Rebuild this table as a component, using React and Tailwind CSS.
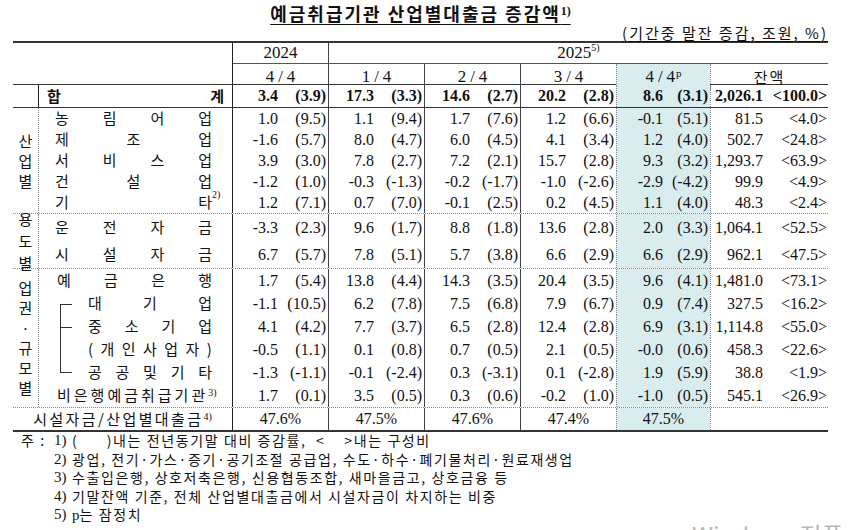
import React from "react";

const KR = "font-['Noto_Sans_CJK_KR',sans-serif]";
const NUM = "font-['Liberation_Serif','Noto_Sans_CJK_KR',serif]";

// 데이터 열 (2024 4/4, 1/4, 2/4, 3/4, 4/4p, 잔액)
const colCls = [
	"w-[96px] border-l border-[#222]",
	"w-[96px] border-l border-[#444]",
	"w-[96px] border-l border-[#444]",
	"w-[96px] border-l border-[#444]",
	"w-[94px] border-l border-dotted border-[#888] bg-[#d9ecee]",
	"w-[118px] border-l border-dotted border-[#888]",
];

const total = [
	["3.4", "(3.9)"],
	["17.3", "(3.3)"],
	["14.6", "(2.7)"],
	["20.2", "(2.8)"],
	["8.6", "(3.1)"],
	["2,026.1", "<100.0>"],
];

const industry = [
	{
		chars: ["농", "림", "어", "업"],
		d: [["1.0", "(9.5)"], ["1.1", "(9.4)"], ["1.7", "(7.6)"], ["1.2", "(6.6)"], ["-0.1", "(5.1)"], ["81.5", "<4.0>"]],
	},
	{
		chars: ["제", "조", "업"],
		d: [["-1.6", "(5.7)"], ["8.0", "(4.7)"], ["6.0", "(4.5)"], ["4.1", "(3.4)"], ["1.2", "(4.0)"], ["502.7", "<24.8>"]],
	},
	{
		chars: ["서", "비", "스", "업"],
		d: [["3.9", "(3.0)"], ["7.8", "(2.7)"], ["7.2", "(2.1)"], ["15.7", "(2.8)"], ["9.3", "(3.2)"], ["1,293.7", "<63.9>"]],
	},
	{
		chars: ["건", "설", "업"],
		d: [["-1.2", "(1.0)"], ["-0.3", "(-1.3)"], ["-0.2", "(-1.7)"], ["-1.0", "(-2.6)"], ["-2.9", "(-4.2)"], ["99.9", "<4.9>"]],
	},
	{
		chars: ["기", "타"],
		sup: "2)",
		d: [["1.2", "(7.1)"], ["0.7", "(7.0)"], ["-0.1", "(2.5)"], ["0.2", "(4.5)"], ["1.1", "(4.0)"], ["48.3", "<2.4>"]],
	},
];

const usage = [
	{
		chars: ["운", "전", "자", "금"],
		d: [["-3.3", "(2.3)"], ["9.6", "(1.7)"], ["8.8", "(1.8)"], ["13.6", "(2.8)"], ["2.0", "(3.3)"], ["1,064.1", "<52.5>"]],
	},
	{
		chars: ["시", "설", "자", "금"],
		d: [["6.7", "(5.7)"], ["7.8", "(5.1)"], ["5.7", "(3.8)"], ["6.6", "(2.9)"], ["6.6", "(2.9)"], ["962.1", "<47.5>"]],
	},
];

const sector = [
	{
		chars: ["예", "금", "은", "행"],
		kind: "bank",
		d: [["1.7", "(5.4)"], ["13.8", "(4.4)"], ["14.3", "(3.5)"], ["20.4", "(3.5)"], ["9.6", "(4.1)"], ["1,481.0", "<73.1>"]],
	},
	{
		chars: ["대", "기", "업"],
		bracket: "top",
		d: [["-1.1", "(10.5)"], ["6.2", "(7.8)"], ["7.5", "(6.8)"], ["7.9", "(6.7)"], ["0.9", "(7.4)"], ["327.5", "<16.2>"]],
	},
	{
		chars: ["중", "소", "기", "업"],
		bracket: "mid",
		d: [["4.1", "(4.2)"], ["7.7", "(3.7)"], ["6.5", "(2.8)"], ["12.4", "(2.8)"], ["6.9", "(3.1)"], ["1,114.8", "<55.0>"]],
	},
	{
		chars: ["(", "개", "인", "사", "업", "자", ")"],
		bracket: "line",
		d: [["-0.5", "(1.1)"], ["0.1", "(0.8)"], ["0.7", "(0.5)"], ["2.1", "(0.5)"], ["-0.0", "(0.6)"], ["458.3", "<22.6>"]],
	},
	{
		chars: ["공", "공", "및", "기", "타"],
		bracket: "bottom",
		d: [["-1.3", "(-1.1)"], ["-0.1", "(-2.4)"], ["0.3", "(-3.1)"], ["0.1", "(-2.8)"], ["1.9", "(5.9)"], ["38.8", "<1.9>"]],
	},
	{
		text: "비은행예금취급기관",
		sup: "3)",
		d: [["1.7", "(0.1)"], ["3.5", "(0.5)"], ["0.3", "(0.6)"], ["-0.2", "(1.0)"], ["-1.0", "(0.5)"], ["545.1", "<26.9>"]],
	},
];

const ratio = ["47.6%", "47.5%", "47.6%", "47.4%", "47.5%", ""];

function Spread({ chars, sup }) {
	return (
		<div className="flex flex-1 justify-between">
			{chars.map((c, i) => (
				<span key={i} className="relative">
					{c}
					{sup && i === chars.length - 1 && (
						<sup className={`absolute left-full top-[-1px] text-[10px] leading-none ${NUM}`}>{sup}</sup>
					)}
				</span>
			))}
		</div>
	);
}

function Bracket({ kind }) {
	const line = "border-[#333]";
	if (kind === "line") return <div className={`w-[12px] h-full border-l ${line}`} />;
	return (
		<div className="w-[12px] h-full flex flex-col">
			<div
				className={`h-1/2 ${
					kind === "mid" ? `border-l ${line}` : kind === "bottom" ? `border-l border-b ${line}` : ""
				}`}
			/>
			<div
				className={`h-1/2 ${
					kind === "top" || kind === "mid" ? `border-l border-t ${line}` : ""
				}`}
			/>
		</div>
	);
}

function Cells({ d, bold }) {
	return d.map(([v, p], i) => (
		<div key={i} className={`${colCls[i]} h-full flex items-center ${NUM} text-[16px] ${bold ? "font-bold" : ""}`}>
			<span className={`${i === 5 ? "w-[52px]" : i === 4 ? "w-[46px]" : "w-[45px]"} text-right whitespace-nowrap`}>{v}</span>
			<span className={`flex-1 text-right whitespace-nowrap ${i === 5 ? "pr-[1px]" : "pr-[2px]"}`}>{p}</span>
		</div>
	));
}

function Row({ row, h }) {
	let label;
	if (row.text) {
		label = (
			<div className="pl-[18px] tracking-[3px] whitespace-nowrap">
				{row.text}
				<sup className={`text-[10px] tracking-normal ${NUM}`}>{row.sup}</sup>
			</div>
		);
	} else if (row.bracket) {
		label = (
			<div className="flex items-stretch h-full w-full pl-[21px] pr-[20px]">
				<Bracket kind={row.bracket} />
				<div className="flex flex-1 items-center pl-[16px]">
					<Spread chars={row.chars} />
				</div>
			</div>
		);
	} else {
		label = (
			<div className={`flex flex-1 ${row.kind === "bank" ? "pl-[18px]" : "pl-[16px]"} pr-[20px]`}>
				<Spread chars={row.chars} sup={row.sup} />
			</div>
		);
	}
	return (
		<div className={`flex ${h}`}>
			<div className={`w-[193px] h-full flex items-center text-[15px] ${KR}`}>{label}</div>
			<Cells d={row.d} />
		</div>
	);
}

function Group({ chars, lead, rows, h, gh, first }) {
	return (
		<div className={`flex ${first ? "border-t border-[#333]" : "border-t border-dotted border-[#888]"}`}>
			<div className={`w-[26px] ${gh} border-r border-dotted border-[#888] flex flex-col items-center justify-center text-[15px] ${lead} ${KR}`}>
				{chars.map((c, i) => (
					<span key={i}>{c}</span>
				))}
			</div>
			<div className="flex flex-col">
				{rows.map((r, i) => (
					<Row key={i} row={r} h={h} />
				))}
			</div>
		</div>
	);
}

export default function App() {
	return (
		<div className="relative w-[849px] h-[530px] overflow-hidden bg-white text-[#111]">
			<div className="ml-[13px] w-[815px]">
				{/* 제목 */}
				<div className="h-[24px] flex items-end justify-center">
					<h1 className={`text-[18px] leading-[22px] font-bold tracking-[2px] underline underline-offset-[3px] ${KR}`}>
						예금취급기관 산업별대출금 증감액
						<sup className={`text-[12px] tracking-normal ${NUM}`}>1)</sup>
					</h1>
				</div>
				<div className="h-[17px] flex justify-end">
					<span className={`text-[15px] leading-[17px] tracking-[2px] underline underline-offset-[2px] ${KR}`}>
						(기간중 말잔 증감, 조원, %)
					</span>
				</div>

				{/* 표 */}
				<div className="border-b-2 border-[#333]">
					{/* 머리글 */}
					<div className={`flex h-[44px] border-t-2 border-b border-[#333] ${NUM} text-[17px]`}>
						<div className="w-[219px]" />
						<div className="w-[96px] border-l border-[#222] flex flex-col">
							<div className="h-[21px] border-b border-[#555] flex items-center justify-center">2024</div>
							<div className="flex-1 flex items-center justify-center">
								<span className="tracking-[4px]">4/</span>4
							</div>
						</div>
						<div className="w-[500px] border-l border-[#444] flex flex-col">
							<div className="h-[21px] border-b border-[#555] flex items-center justify-center">
								2025<sup className="text-[10px]">5)</sup>
							</div>
							<div className="flex-1 flex">
								<div className="w-[95px] flex items-center justify-center">
									<span className="tracking-[4px]">1/</span>4
								</div>
								<div className="w-[96px] border-l border-[#444] flex items-center justify-center">
									<span className="tracking-[4px]">2/</span>4
								</div>
								<div className="w-[96px] border-l border-[#444] flex items-center justify-center">
									<span className="tracking-[4px]">3/</span>4
								</div>
								<div className="w-[94px] border-l border-dotted border-[#888] bg-[#d9ecee] flex items-center justify-center">
									<span>
										<span className="tracking-[4px]">4/</span>4<sup className="text-[11px] ml-[1px]">p</sup>
									</span>
								</div>
								<div className={`w-[118px] border-l border-dotted border-[#888] flex items-center justify-center text-[15px] tracking-[2px] ${KR}`}>
									잔액
								</div>
							</div>
						</div>
					</div>

					{/* 합계 */}
					<div className="flex h-[22px]">
						<div className="w-[26px] border-r border-[#222]" />
						<div className={`w-[193px] h-full flex items-center justify-between pl-[8px] pr-[8px] text-[15px] font-bold ${KR}`}>
							<span>합</span>
							<span>계</span>
						</div>
						<Cells d={total} bold />
					</div>

					<Group first chars={["산", "업", "별"]} lead="leading-[20px]" gh="h-[105px]" rows={industry} h="h-[21px]" />
					<Group chars={["용", "도", "별"]} lead="leading-[22px]" gh="h-[54px]" rows={usage} h="h-[27px]" />
					<Group chars={["업", "권", "·", "규", "모", "별"]} lead="leading-[20px]" gh="h-[138px]" rows={sector} h="h-[23px]" />

					{/* 시설자금 비중 */}
					<div className="flex h-[23px] border-t border-dotted border-[#888]">
						<div className={`w-[219px] h-full flex items-center justify-center text-[15px] tracking-[2.4px] ${KR}`}>
							<span>
								시설자금/산업별대출금
								<sup className={`text-[10px] tracking-normal ${NUM}`}>4)</sup>
							</span>
						</div>
						{ratio.map((r, i) => (
							<div key={i} className={`${colCls[i]} h-full flex items-center justify-center text-[16px] ${NUM}`}>
								{r}
							</div>
						))}
					</div>
				</div>

				{/* 주석 */}
				<div className={`mt-[-1px] text-[14px] leading-[18.5px] tracking-[1.6px] ${KR}`}>
					<div className="flex whitespace-pre">
						<span className="w-[41px] pl-[8px]">주 :</span>
						<span className={`w-[18px] tracking-normal ${NUM} text-[15px]`}>1)</span>
						<span>(      )내는 전년동기말 대비 증감률,  &lt;    &gt;내는 구성비</span>
					</div>
					<div className="flex">
						<span className="w-[41px]" />
						<span className={`w-[18px] tracking-normal ${NUM} text-[15px]`}>2)</span>
						<span>광업, 전기·가스·증기·공기조절 공급업, 수도·하수·폐기물처리·원료재생업</span>
					</div>
					<div className="flex">
						<span className="w-[41px]" />
						<span className={`w-[18px] tracking-normal ${NUM} text-[15px]`}>3)</span>
						<span>수출입은행, 상호저축은행, 신용협동조합, 새마을금고, 상호금융 등</span>
					</div>
					<div className="flex">
						<span className="w-[41px]" />
						<span className={`w-[18px] tracking-normal ${NUM} text-[15px]`}>4)</span>
						<span>기말잔액 기준, 전체 산업별대출금에서 시설자금이 차지하는 비중</span>
					</div>
					<div className="flex">
						<span className="w-[41px]" />
						<span className={`w-[18px] tracking-normal ${NUM} text-[15px]`}>5)</span>
						<span>
							<span className={`${NUM} text-[15px] tracking-normal`}>p</span>는 잠정치
						</span>
					</div>
				</div>
			</div>

			{/* 워터마크 */}
			<div className={`absolute left-[692px] top-[517px] text-[24px] whitespace-nowrap text-[#b8b8b8] ${KR}`}>
				Windows 정품 인증
			</div>
		</div>
	);
}
